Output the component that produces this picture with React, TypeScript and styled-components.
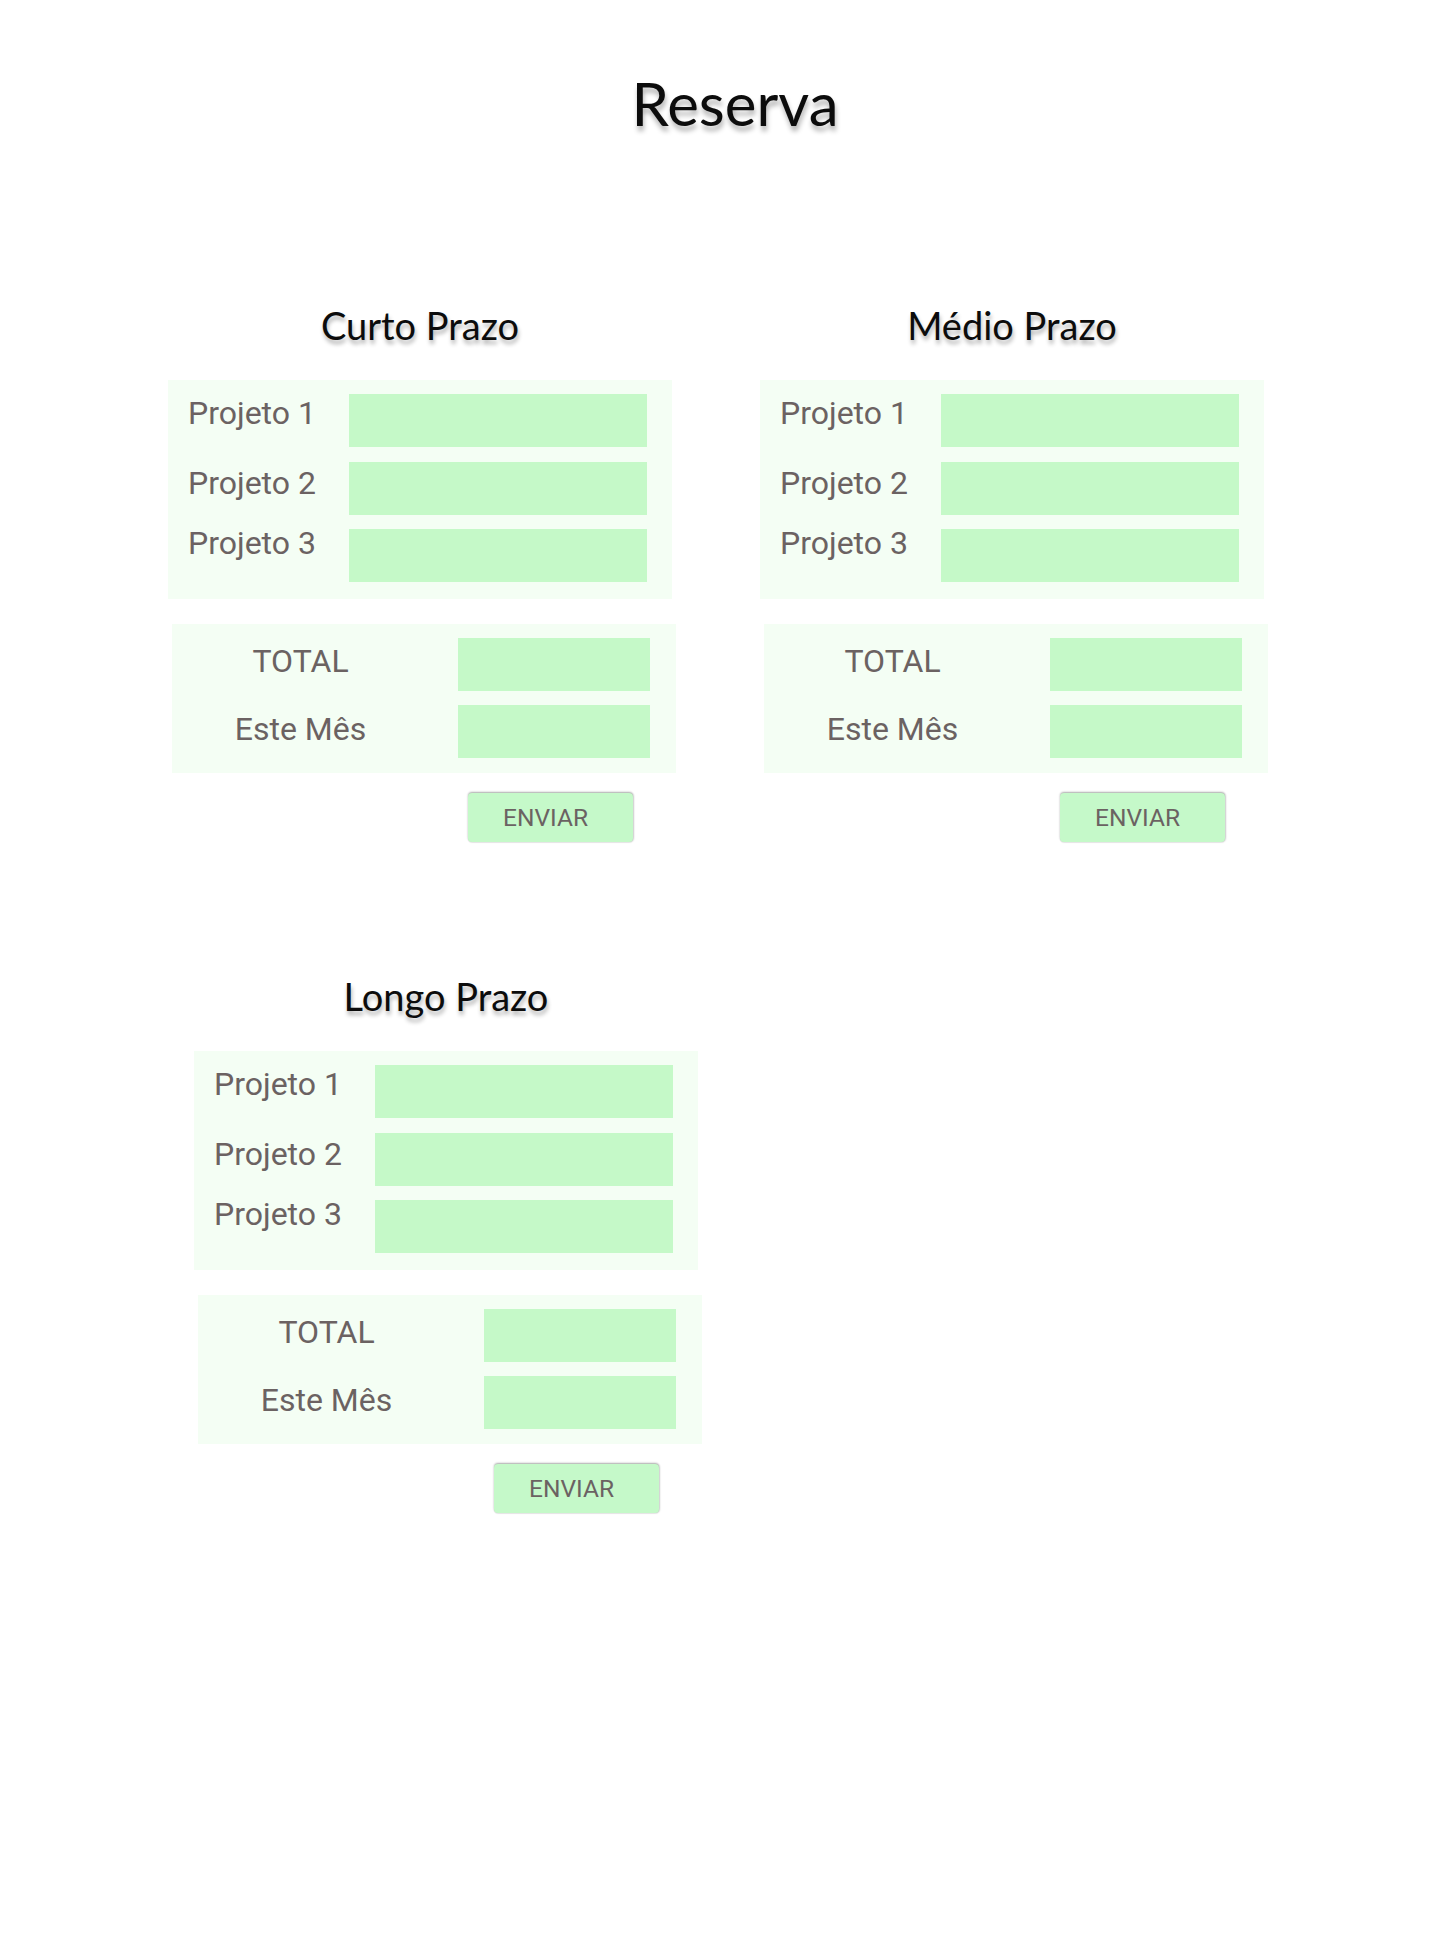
import React from "react";
import styled, { createGlobalStyle } from "styled-components";

const GlobalStyle = createGlobalStyle`
  html, body { margin: 0; padding: 0; background: #ffffff; }
  body { font-family: Roboto, "Liberation Sans", sans-serif; }
`;

const Page = styled.div`
  width: 1440px;
  min-height: 1952px;
  background: #ffffff;
  box-sizing: border-box;
  padding-top: 67px;
`;

const PageTitle = styled.h1`
  margin: 0 0 0 30px;
  text-align: center;
  font-family: Lato, "Open Sans", sans-serif;
  font-weight: 400;
  font-size: 60px;
  line-height: 72px;
  color: #0c0c0c;
  text-shadow: 1px 5px 5px rgba(0, 0, 0, 0.3);
`;

const Sections = styled.div`
  display: flex;
  flex-direction: column;
  gap: 131px;
  padding-left: 168px;
  margin-top: 163px;
`;

const SectionRow = styled.div<{ $indent?: number }>`
  display: flex;
  gap: 84px;
  padding-left: ${(p) => p.$indent ?? 0}px;
`;

const Group = styled.section`
  width: 508px;
  display: flex;
  flex-direction: column;
`;

const GroupTitle = styled.h2`
  margin: 0;
  width: 504px;
  text-align: center;
  font-family: Lato, "Open Sans", sans-serif;
  font-weight: 400;
  font-size: 38px;
  line-height: 46px;
  color: #0c0c0c;
  text-shadow: 1px 4px 4px rgba(0, 0, 0, 0.3);
`;

const ProjectPanel = styled.div`
  margin-top: 32px;
  width: 504px;
  box-sizing: border-box;
  background: #f4fef4;
  padding: 14px 26px 17px 20px;
  display: grid;
  grid-template-columns: 161px 298px;
  row-gap: 14.5px;
`;

const TotalPanel = styled.div`
  margin-top: 25px;
  margin-left: 4px;
  width: 504px;
  box-sizing: border-box;
  background: #f4fef4;
  padding: 14px 26px 15px 0;
  display: grid;
  grid-template-columns: 257px 192px;
  column-gap: 29px;
  row-gap: 14px;
`;

const Label = styled.div<{ $offset: number; $center?: boolean }>`
  font-family: Roboto, "Liberation Sans", sans-serif;
  font-size: 32px;
  line-height: 36px;
  color: #6b6262;
  margin-top: ${(p) => p.$offset}px;
  text-align: ${(p) => (p.$center ? "center" : "left")};
  white-space: nowrap;
`;

const Field = styled.div`
  height: 53px;
  background: #c5f9c8;
`;

const ButtonRow = styled.div`
  margin-top: 20px;
  padding-left: 300px;
  display: flex;
`;

const SendButton = styled.button`
  width: 165px;
  height: 49px;
  border: none;
  border-radius: 4px;
  background: #c5f9c9;
  box-shadow: 0 -1px 2px rgba(0, 0, 0, 0.3), 1px 0 2px rgba(0, 0, 0, 0.12),
    0 1px 1px rgba(0, 0, 0, 0.06);
  font-family: Roboto, "Liberation Sans", sans-serif;
  font-size: 24.5px;
  color: #6b6262;
  padding: 0 10px 0 0;
  cursor: pointer;
`;

const projectOffsets = [1, 3, -4];
const totalRows = [
  { label: "TOTAL", offset: 5 },
  { label: "Este Mês", offset: 6 },
];

function ReserveGroup({ title }: { title: string }) {
  return (
    <Group>
      <GroupTitle>{title}</GroupTitle>
      <ProjectPanel>
        {projectOffsets.map((offset, i) => (
          <React.Fragment key={i}>
            <Label $offset={offset}>Projeto {i + 1}</Label>
            <Field />
          </React.Fragment>
        ))}
      </ProjectPanel>
      <TotalPanel>
        {totalRows.map((row) => (
          <React.Fragment key={row.label}>
            <Label $offset={row.offset} $center>
              {row.label}
            </Label>
            <Field />
          </React.Fragment>
        ))}
      </TotalPanel>
      <ButtonRow>
        <SendButton>ENVIAR</SendButton>
      </ButtonRow>
    </Group>
  );
}

export default function App() {
  return (
    <Page>
      <GlobalStyle />
      <PageTitle>Reserva</PageTitle>
      <Sections>
        <SectionRow>
          <ReserveGroup title="Curto Prazo" />
          <ReserveGroup title="Médio Prazo" />
        </SectionRow>
        <SectionRow $indent={26}>
          <ReserveGroup title="Longo Prazo" />
        </SectionRow>
      </Sections>
    </Page>
  );
}
